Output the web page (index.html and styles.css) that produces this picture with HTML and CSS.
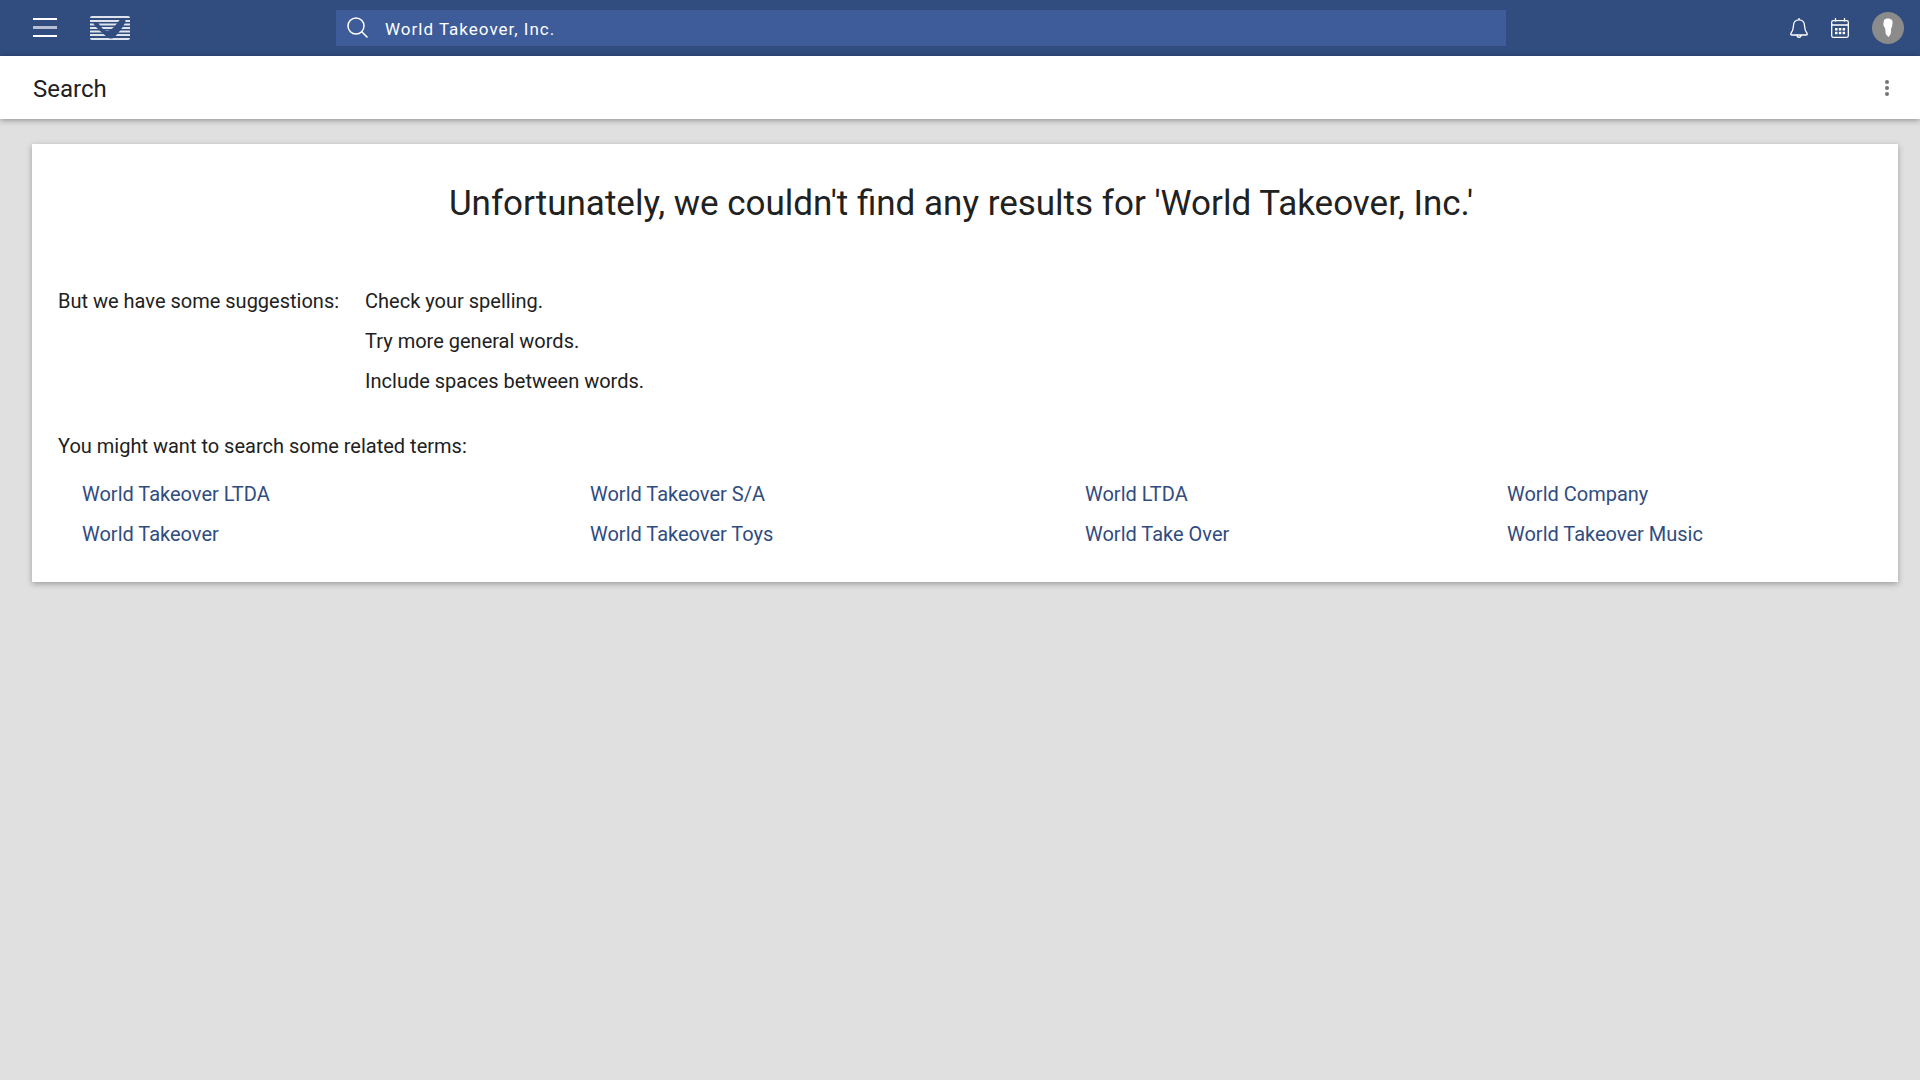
FILE: index.html
```html
<!DOCTYPE html>
<html lang="en">
<head>
<meta charset="utf-8">
<title>Search</title>
<meta name="viewport" content="width=device-width, initial-scale=1">
<link rel="stylesheet" href="styles.css">
</head>
<body>
<header class="topbar">
  <div class="topbar-left">
    <button class="icon-button menu-button" type="button" aria-label="Menu">
      <svg width="24" height="20" viewBox="0 0 24 20" fill="#fff"><path d="M0 0h24v2H0zM0 17h24v2H0z"/><path d="M0 8h24v3H0z" fill-opacity=".65"/></svg>
    </button>
    <a class="logo" href="#" aria-label="Home">
      <svg width="40" height="24" viewBox="0 0 40 24">
        <clipPath id="card"><rect width="40" height="24" rx="2"/></clipPath>
        <g clip-path="url(#card)">
          <path d="M0 1h40M0 5h40M0 8.500h40M0 12h40M0 15.500h40M0 19h40M0 23h40" stroke="#dfe3ec" stroke-width="2"/>
          <path d="M3.500 8C4 5.500 7 5.200 8.500 7.200C11 11 14 14.500 17.500 15C21.500 14.500 26 9 30 3.500C32 .8 36 2.500 35.500 5.500C33.500 11 28.500 17 24.500 21.200C22.500 23 19.500 23 17.500 21.200C12 17 6.500 12 3.500 8Z" fill="#314c7f"/>
        </g>
      </svg>
    </a>
  </div>
  <form class="search" role="search">
    <label class="search-label" for="query" aria-label="Search">
      <svg width="22" height="22" viewBox="0 0 22 22" fill="none" stroke="#fff" stroke-width="1.500"><circle cx="9" cy="9" r="8"/><path d="M14.500 14.500l6 6"/></svg>
    </label>
    <input class="search-input" id="query" type="text" value="World Takeover, Inc.">
  </form>
  <div class="topbar-right">
    <button class="icon-button" type="button" aria-label="Notifications">
      <svg width="18" height="20" viewBox="0 0 18 20" fill="none" stroke="#fff" stroke-width="1.300" stroke-linejoin="round"><path d="M9 1.800C5.500 1.800 3.600 4.500 3.500 7.500C3.400 11.500 3 13 .9 15.500C.5 16.400 1 17 1.800 17H16.200C17 17 17.500 16.400 17.100 15.500C15 13 14.600 11.500 14.500 7.500C14.400 4.500 12.500 1.800 9 1.800Z"/><path d="M9 0v2M7 17c0 3 4 3 4 0"/></svg>
    </button>
    <button class="icon-button" type="button" aria-label="Calendar">
      <svg width="18" height="20" viewBox="0 0 18 20" fill="none" stroke="#fff" stroke-width="1.300"><rect x=".7" y="2.700" width="16.600" height="16.600" rx="1.500"/><path d="M.7 7h16.600M4.500 0v3.500M13.500 0v3.500"/><path d="M4 11.200h2.500M7.800 11.200h2.500M11.600 11.200h2.500M4 15h2.500M7.800 15h2.500M11.600 15h2.500" stroke-width="2.400"/></svg>
    </button>
    <button class="icon-button avatar" type="button" aria-label="Account">
      <svg width="32" height="32" viewBox="0 0 32 32"><circle cx="16" cy="16" r="16" fill="#8b8b8b"/><path d="M12 8C13.500 6 18 5.800 20 8C21 10.500 20.500 12.500 20 14.500C19.600 16 18.800 17 19 18.500C19.300 20.500 18.700 22 18 23L16.500 25L15 23.500C13.500 22.500 13.500 20.500 13.500 19L13 16C11.600 14.500 11 12.500 11.500 11Z" fill="#fff"/></svg>
    </button>
  </div>
</header>
<div class="titlebar">
  <h1 class="page-title">Search</h1>
  <button class="icon-button more-button" type="button" aria-label="More options">
    <svg width="4" height="16" viewBox="0 0 4 16" fill="#757575"><circle cx="2" cy="2" r="2"/><circle cx="2" cy="8" r="2"/><circle cx="2" cy="14" r="2"/></svg>
  </button>
</div>
<main class="card">
  <h2 class="headline">Unfortunately, we couldn't find any results for 'World Takeover, Inc.'</h2>
  <section class="suggestions">
    <p class="line">But we have some suggestions:</p>
    <ul class="list">
      <li class="line">Check your spelling.</li>
      <li class="line">Try more general words.</li>
      <li class="line">Include spaces between words.</li>
    </ul>
  </section>
  <section class="related">
    <p class="line">You might want to search some related terms:</p>
    <ul class="list terms">
      <li class="line"><a href="#">World Takeover LTDA</a></li>
      <li class="line"><a href="#">World Takeover S/A</a></li>
      <li class="line"><a href="#">World LTDA</a></li>
      <li class="line"><a href="#">World Company</a></li>
      <li class="line"><a href="#">World Takeover</a></li>
      <li class="line"><a href="#">World Takeover Toys</a></li>
      <li class="line"><a href="#">World Take Over</a></li>
      <li class="line"><a href="#">World Takeover Music</a></li>
    </ul>
  </section>
</main>
</body>
</html>
```
FILE: styles.css
```css
* {
  box-sizing: border-box;
}

body {
  display: flow-root;
  min-height: 100vh;
  margin: 0;
  background: #e0e0e0;
  color: #212121;
  font-family: Roboto, "Liberation Sans", sans-serif;
  font-size: 20px;
}

h1, h2, p {
  margin: 0;
  font-weight: 400;
}

svg {
  display: block;
}

.topbar {
  display: grid;
  grid-template-columns: 336fr 1170fr 414fr;
  align-items: center;
  height: 56px;
  background: #314c7f;
}

.topbar-left {
  display: flex;
  align-items: center;
  gap: 33px;
  padding-left: 33px;
}

.topbar-right {
  display: flex;
  align-items: center;
  justify-content: flex-end;
  gap: 23px;
  padding-right: 16px;
}

.icon-button {
  padding: 0;
  border: 0;
  background: none;
  cursor: pointer;
}

.search {
  display: flex;
  align-items: center;
  height: 36px;
  background: #3d5c99;
}

.search-label {
  padding: 0 16px 0 11px;
}

.search-input {
  flex: 1;
  height: 36px;
  padding: 2px 0 0;
  border: 0;
  outline: 0;
  background: none;
  color: #fff;
  font: 17px Roboto, "Liberation Sans", sans-serif;
  letter-spacing: 1px;
}

.titlebar {
  display: flex;
  align-items: center;
  justify-content: space-between;
  height: 63px;
  padding: 0 31px 0 33px;
  background: #fff;
  box-shadow: 0 1px 6px rgba(0, 0, 0, .4);
}

.page-title {
  padding-top: 2px;
  font-size: 24px;
}

.card {
  margin: 25px 22px 32px 32px;
  padding: 36px 26px 28px;
  background: #fff;
  box-shadow: 0 2px 6px rgba(0, 0, 0, .3);
}

.headline {
  margin-bottom: 53px;
  padding-right: 8px;
  font-size: 35px;
  line-height: 48px;
  text-align: center;
}

.line {
  line-height: 40px;
}

.list {
  margin: 0;
  padding: 0;
  list-style: none;
}

.suggestions {
  display: flex;
  gap: 26px;
  margin-bottom: 25px;
}

.terms {
  display: grid;
  grid-template-columns: 508fr 495fr 422fr 365fr;
  margin-top: 8px;
  padding-left: 24px;
}

.terms a {
  color: #314c7f;
  text-decoration: none;
}
```
